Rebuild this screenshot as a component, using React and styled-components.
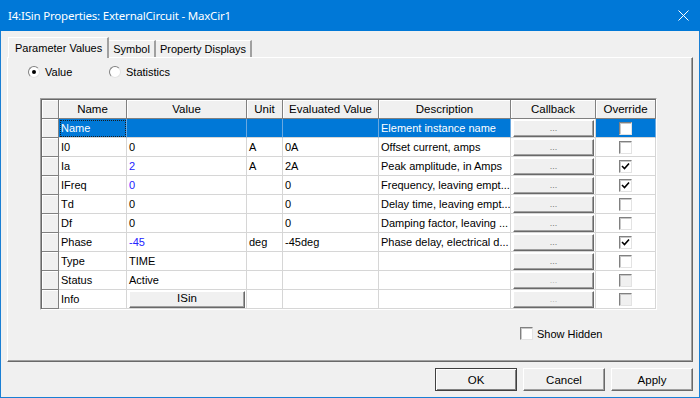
import React from 'react';
import styled, { createGlobalStyle, css } from 'styled-components';

const GlobalStyle = createGlobalStyle`
  body {
    margin: 0;
    background: #f0f0f0;
    font-family: "Liberation Sans", Arial, sans-serif;
    font-size: 11px;
    color: #000;
  }
`;

const rows = [
  { name: 'Name', desc: 'Element instance name', selected: true },
  { name: 'I0', value: '0', unit: 'A', evald: '0A', desc: 'Offset current, amps' },
  { name: 'Ia', value: '2', blue: true, unit: 'A', evald: '2A', desc: 'Peak amplitude, in Amps', override: true },
  { name: 'IFreq', value: '0', blue: true, evald: '0', desc: 'Frequency, leaving empt...', override: true },
  { name: 'Td', value: '0', evald: '0', desc: 'Delay time, leaving empt...' },
  { name: 'Df', value: '0', evald: '0', desc: 'Damping factor, leaving ...' },
  { name: 'Phase', value: '-45', blue: true, unit: 'deg', evald: '-45deg', desc: 'Phase delay, electrical d...', override: true },
  { name: 'Type', value: 'TIME' },
  { name: 'Status', value: 'Active', disabled: true },
  { name: 'Info', button: 'ISin', disabled: true },
];

const columns = [
  { label: '', width: 17 },
  { label: 'Name', width: 68 },
  { label: 'Value', width: 120 },
  { label: 'Unit', width: 36 },
  { label: 'Evaluated Value', width: 96 },
  { label: 'Description', width: 132 },
  { label: 'Callback', width: 85 },
  { label: 'Override', width: 60 },
];

const Window = styled.div`
  width: 700px;
  height: 398px;
  box-sizing: border-box;
  border: 1px solid #1a7fd4;
  border-top: none;
  display: flex;
  flex-direction: column;
  background: #f0f0f0;
`;

const TitleBar = styled.div`
  height: 31px;
  margin: 0 -1px;
  background: #0078d7;
  color: #fff;
  display: flex;
  align-items: center;
  justify-content: space-between;
  padding: 0 11px 0 8px;
  font-family: "Noto Sans", sans-serif;
  font-size: 11.5px;
  letter-spacing: -0.2px;
`;

const Body = styled.div`
  flex: 1;
  display: flex;
  flex-direction: column;
  padding: 6px 6px 0 6px;
`;

const TabStrip = styled.div`
  display: flex;
  align-items: flex-end;
  height: 20px;
  padding-left: 1px;
  position: relative;
  z-index: 1;
`;

const Tab = styled.div`
  box-sizing: border-box;
  height: ${(p) => (p.$active ? '21px' : '17px')};
  padding: ${(p) => (p.$active ? '4px 5px 0 6px' : '2px 4px 0 4px')};
  margin-bottom: ${(p) => (p.$active ? '-1px' : '0')};
  background: #f0f0f0;
  border-top: 1px solid #fff;
  border-left: ${(p) => (p.$active ? '1px solid #fff' : 'none')};
  border-right: 2px solid #a0a0a0;
  white-space: nowrap;
`;

const Panel = styled.div`
  height: 305px;
  box-sizing: border-box;
  border-top: 1px solid #fff;
  border-left: 1px solid #fff;
  border-right: 1px solid #696969;
  border-bottom: 1px solid #696969;
  box-shadow: inset -1px -1px 0 #a0a0a0;
  display: flex;
  flex-direction: column;
  padding: 6px 0 0 32px;
`;

const RadioRow = styled.div`
  display: flex;
  align-items: center;
  height: 16px;
  margin-left: -12px;
`;

const RadioLabel = styled.label`
  display: flex;
  align-items: center;
  gap: 5px;
  width: ${(p) => p.$width}px;
`;

const RadioCircle = styled.span`
  width: 12px;
  height: 12px;
  box-sizing: border-box;
  border-radius: 50%;
  background: #fff;
  border: 1px solid;
  border-color: #808080 #e3e3e3 #e3e3e3 #808080;
  display: flex;
  align-items: center;
  justify-content: center;
  &::after {
    content: '';
    width: 4px;
    height: 4px;
    border-radius: 50%;
    background: ${(p) => (p.$checked ? '#000' : 'transparent')};
  }
`;

const GridFrame = styled.div`
  margin-top: 18px;
  width: 617px;
  box-sizing: border-box;
  border: 1px solid;
  border-color: #a0a0a0 #fff #fff #a0a0a0;
  background: #f0f0f0;
`;

const Table = styled.table`
  border-collapse: separate;
  border-spacing: 0;
  table-layout: fixed;
  width: 615px;
  border-top: 1px solid #696969;
  border-left: 1px solid #696969;
`;

const Head = styled.th`
  height: 19px;
  box-sizing: border-box;
  padding: 0;
  font-weight: normal;
  font-size: 11.5px;
  text-align: center;
  background: #f0f0f0;
  border-right: 1px solid #808080;
  border-bottom: 1px solid #808080;
  box-shadow: inset 1px 1px 0 #fff;
  white-space: nowrap;
  overflow: hidden;
`;

const RowHead = styled.td`
  height: 19px;
  box-sizing: border-box;
  padding: 0;
  background: #f0f0f0;
  border-right: 1px solid #808080;
  border-bottom: 1px solid #808080;
  box-shadow: inset 1px 1px 0 #fff;
`;

const Cell = styled.td`
  height: 19px;
  box-sizing: border-box;
  padding: 0 0 0 2px;
  font-size: 11px;
  white-space: nowrap;
  overflow: hidden;
  background: ${(p) => (p.$selected ? '#0078d7' : '#fff')};
  color: ${(p) => (p.$selected ? '#fff' : p.$blue ? '#2323ff' : '#000')};
  border-right: 1px solid ${(p) => (p.$selected ? '#6aa8e0' : '#d6d6d6')};
  border-bottom: 1px solid #d6d6d6;
  ${(p) =>
    p.$focus &&
    css`
      outline: 1px dotted #1a1a1a;
      outline-offset: -2px;
    `}
  ${(p) =>
    p.$center &&
    css`
      padding: 0;
      text-align: center;
    `}
`;

const raised = css`
  box-sizing: border-box;
  background: #f0f0f0;
  border: 1px solid;
  border-color: #fff #696969 #696969 #fff;
  box-shadow: inset -1px -1px 0 #a0a0a0;
`;

const CellButton = styled.div`
  ${raised};
  height: 17px;
  margin: 0 ${(p) => p.$right}px 0 ${(p) => p.$left}px;
  display: flex;
  align-items: center;
  justify-content: center;
  color: ${(p) => (p.$dots ? (p.$disabled ? '#b8b8b8' : '#7a7a7a') : '#000')};
  font-size: ${(p) => (p.$dots ? '9px' : '11.5px')};
  line-height: 1;
`;

const Check = styled.span`
  display: inline-flex;
  align-items: center;
  justify-content: center;
  width: 13px;
  height: 13px;
  box-sizing: border-box;
  vertical-align: middle;
  background: ${(p) => (p.$disabled ? '#f0f0f0' : '#fff')};
  border: 1px solid;
  border-color: #808080 #e3e3e3 #e3e3e3 #808080;
  box-shadow: inset 1px 1px 0 #c8c8c8;
`;

const ShowHiddenRow = styled.div`
  display: flex;
  align-items: center;
  gap: 4px;
  margin: 17px 0 0 480px;
`;

const Buttons = styled.div`
  display: flex;
  justify-content: flex-end;
  gap: 6px;
  padding: 6px 0 0 0;
`;

const DialogButton = styled.div`
  ${raised};
  width: 82px;
  height: 23px;
  display: flex;
  align-items: center;
  justify-content: center;
  font-size: 11.5px;
  ${(p) =>
    p.$default &&
    css`
      border-color: #404040;
      box-shadow: inset 1px 1px 0 #fff, inset -1px -1px 0 #808080;
    `}
`;

const CheckMark = () => (
  <svg width="9" height="9" viewBox="0 0 9 9">
    <path d="M1 4 L3.5 6.5 L8 1.5" fill="none" stroke="#000" strokeWidth="1.6" />
  </svg>
);

const CloseIcon = () => (
  <svg width="11" height="11" viewBox="0 0 11 11">
    <path d="M0.5 0.5 L10.5 10.5 M10.5 0.5 L0.5 10.5" stroke="#fff" strokeWidth="1" />
  </svg>
);

const App = () => {
  return (
    <>
      <GlobalStyle />
      <Window>
        <TitleBar>
          <span>I4:ISin Properties: ExternalCircuit - MaxCir1</span>
          <CloseIcon />
        </TitleBar>
        <Body>
          <TabStrip>
            <Tab $active>Parameter Values</Tab>
            <Tab>Symbol</Tab>
            <Tab>Property Displays</Tab>
          </TabStrip>
          <Panel>
            <RadioRow>
              <RadioLabel $width={81}>
                <RadioCircle $checked />
                Value
              </RadioLabel>
              <RadioLabel $width={90}>
                <RadioCircle />
                Statistics
              </RadioLabel>
            </RadioRow>
            <GridFrame>
              <Table>
                <colgroup>
                  {columns.map((c, i) => (
                    <col key={i} style={{ width: c.width }} />
                  ))}
                </colgroup>
                <thead>
                  <tr>
                    {columns.map((c, i) => (
                      <Head key={i}>{c.label}</Head>
                    ))}
                  </tr>
                </thead>
                <tbody>
                  {rows.map((r) => (
                    <tr key={r.name}>
                      <RowHead />
                      <Cell $selected={r.selected} $focus={r.selected}>
                        {r.name}
                      </Cell>
                      <Cell $selected={r.selected} $blue={r.blue} $center={!!r.button}>
                        {r.button ? (
                          <CellButton $left={2} $right={1}>
                            {r.button}
                          </CellButton>
                        ) : (
                          r.value
                        )}
                      </Cell>
                      <Cell $selected={r.selected}>{r.unit}</Cell>
                      <Cell $selected={r.selected}>{r.evald}</Cell>
                      <Cell $selected={r.selected}>{r.desc}</Cell>
                      <Cell $center>
                        <CellButton $dots $disabled={r.disabled} $left={2} $right={1}>
                          ...
                        </CellButton>
                      </Cell>
                      <Cell $selected={r.selected} $center>
                        <Check $disabled={r.disabled}>{r.override && <CheckMark />}</Check>
                      </Cell>
                    </tr>
                  ))}
                </tbody>
              </Table>
            </GridFrame>
            <ShowHiddenRow>
              <Check />
              Show Hidden
            </ShowHiddenRow>
          </Panel>
          <Buttons>
            <DialogButton $default>OK</DialogButton>
            <DialogButton>Cancel</DialogButton>
            <DialogButton>Apply</DialogButton>
          </Buttons>
        </Body>
      </Window>
    </>
  );
};

export default App;
